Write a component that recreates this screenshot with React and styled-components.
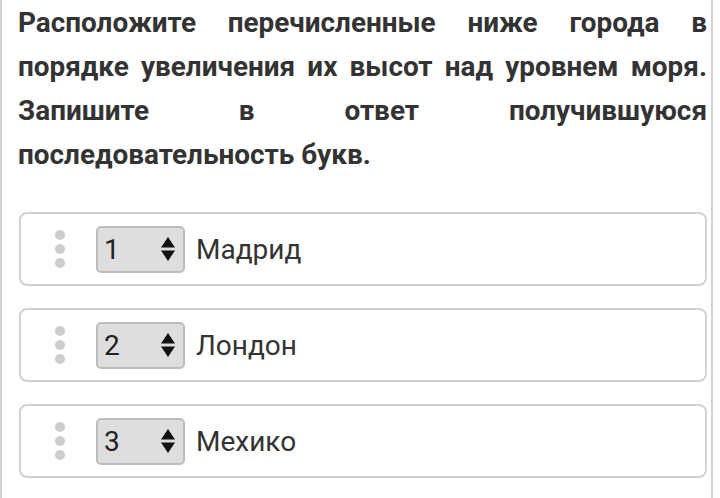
import React from "react";
import styled, { createGlobalStyle } from "styled-components";

const GlobalStyle = createGlobalStyle`
  body {
    margin: 0;
    background: #fff;
    font-family: Roboto, "Liberation Sans", sans-serif;
  }
`;

const Page = styled.div`
  width: 713px;
  height: 498px;
  margin-right: 3px;
  border-left: 2px solid #d0d0d0;
  border-right: 2px solid #d0d0d0;
  padding: 1px 4px 0 16px;
  box-sizing: border-box;
  overflow: hidden;
`;

const Question = styled.div`
  margin: 0 0 35px 0;
  font-size: 27.9px;
  line-height: 44px;
  font-weight: 700;
  color: #333;
`;

const Line = styled.span`
  display: block;
  text-align: justify;
  text-align-last: ${(p) => (p.$last ? "left" : "justify")};
`;

const List = styled.div`
  display: flex;
  flex-direction: column;
  gap: 22px;
  margin-left: 1px;
`;

const Card = styled.div`
  display: flex;
  align-items: center;
  height: 74px;
  box-sizing: border-box;
  border: 2px solid #d2d2d2;
  border-radius: 8px;
  padding-left: 34px;
`;

const Handle = styled.div`
  display: flex;
  flex-direction: column;
  gap: 4px;
  margin-right: 31px;
  margin-top: -1px;
`;

const Dot = styled.span`
  width: 10px;
  height: 10px;
  border-radius: 50%;
  background: #cdcdcd;
`;

const Select = styled.div`
  display: flex;
  align-items: center;
  justify-content: space-between;
  width: 89px;
  height: 47px;
  box-sizing: border-box;
  padding: 0 8px 0 6px;
  background: #dedede;
  border: 2px solid #bdbdbd;
  border-radius: 5px;
  font-size: 28px;
  color: #222;
`;

const City = styled.span`
  margin-left: 11px;
  font-size: 28px;
  color: #333;
`;

const Arrows = () => (
  <svg width="14" height="24" viewBox="0 0 14 24">
    <polygon points="7,0 14,10.5 0,10.5" fill="#111" />
    <polygon points="0,13.5 14,13.5 7,24" fill="#111" />
  </svg>
);

const lines = [
  "Расположите перечисленные ниже города в",
  "порядке увеличения их высот над уровнем моря.",
  "Запишите в ответ получившуюся",
  "последовательность букв.",
];

const cities = ["Мадрид", "Лондон", "Мехико"];

export default function App() {
  return (
    <>
      <GlobalStyle />
      <Page>
        <Question>
          {lines.map((text, i) => (
            <Line key={i} $last={i === lines.length - 1}>
              {text}
            </Line>
          ))}
        </Question>
        <List>
          {cities.map((city, i) => (
            <Card key={city}>
              <Handle>
                <Dot />
                <Dot />
                <Dot />
              </Handle>
              <Select>
                <span>{i + 1}</span>
                <Arrows />
              </Select>
              <City>{city}</City>
            </Card>
          ))}
        </List>
      </Page>
    </>
  );
}
